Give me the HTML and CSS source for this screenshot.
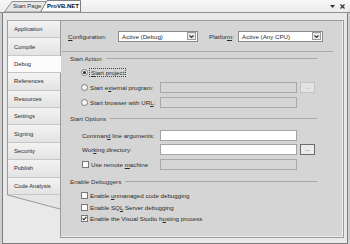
FILE: index.html
```html
<!DOCTYPE html>
<html>
<head>
<meta charset="utf-8">
<link rel="stylesheet" href="styles.css">
</head>
<body>
<div class="tabstrip">
  <div class="doctab doctab--start">
    <svg class="doctab-bg" width="42" height="11" viewBox="0 0 42 11"><polygon points="0.5,11 8,0.5 42,0.5 42,11" fill="#e6e6e6" stroke="#8e8e8e" stroke-width="1"/></svg>
    <span class="doctab-label">Start Page</span>
  </div>
  <div class="doctab doctab--active">
    <svg class="doctab-bg" width="42" height="12" viewBox="0 0 42 12"><polygon points="0.5,12 7,0.5 40.5,0.5 40.5,12" fill="#fbfbfb" stroke="#7e7e7e" stroke-width="1"/></svg>
    <span class="doctab-label">ProVB.NET</span>
  </div>
  <div class="winctl">
    <svg width="5" height="3" viewBox="0 0 5 3"><polygon points="0,0 5,0 2.5,3" fill="#333"/></svg>
    <svg width="5" height="5" viewBox="0 0 5 5"><path d="M0.5 0.5 L4.5 4.5 M4.5 0.5 L0.5 4.5" stroke="#333" stroke-width="1.2" fill="none"/></svg>
  </div>
</div>
<div class="frame">
  <div class="side">
    <div class="side-list">
      <div class="side-tab">Application</div>
      <div class="side-tab">Compile</div>
      <div class="side-tab is-selected">Debug</div>
      <div class="side-tab">References</div>
      <div class="side-tab">Resources</div>
      <div class="side-tab">Settings</div>
      <div class="side-tab">Signing</div>
      <div class="side-tab">Security</div>
      <div class="side-tab">Publish</div>
      <div class="side-tab">Code Analysis</div>
    </div>
    <svg class="side-foot" width="53" height="15" viewBox="0 0 53 15"><polygon points="0,0 53,0 53,14" fill="#e5e5e5"/><line x1="0.5" y1="0" x2="53" y2="14" stroke="#9a9a9a" stroke-width="1"/></svg>
  </div>
  <div class="panel">
    <div class="config-row">
      <span class="cfg-label"><u>C</u>onfiguration:</span>
      <div class="select"><span class="select-text">Active (Debug)</span><span class="select-btn"><svg width="5" height="3" viewBox="0 0 5 3"><polyline points="0.5,0.5 2.5,2.5 4.5,0.5" fill="none" stroke="#333" stroke-width="1.1"/></svg></span></div>
      <span class="cfg-label cfg-label--platform">Platfor<u>m</u>:</span>
      <div class="select select--wide"><span class="select-text">Active (Any CPU)</span><span class="select-btn"><svg width="5" height="3" viewBox="0 0 5 3"><polyline points="0.5,0.5 2.5,2.5 4.5,0.5" fill="none" stroke="#333" stroke-width="1.1"/></svg></span></div>
    </div>
    <div class="sep"></div>

    <div class="heading"><span>Start Action</span><span class="heading-line"></span></div>
    <div class="opt-row opt-row--first">
      <span class="opt-label"><span class="radio"><span class="radio-dot"></span></span><span class="focus"><u>S</u>tart project</span></span>
    </div>
    <div class="opt-row">
      <span class="opt-label"><span class="radio"></span><span>Start e<u>x</u>ternal program:</span></span>
      <span class="textbox"></span>
      <span class="browse">...</span>
    </div>
    <div class="opt-row">
      <span class="opt-label"><span class="radio"></span><span>Start browser with UR<u>L</u>:</span></span>
      <span class="textbox"></span>
    </div>

    <div class="heading heading--options"><span>Start Options</span><span class="heading-line"></span></div>
    <div class="field-row field-row--first">
      <span class="field-label"><span>Comman<u>d</u> line arguments:</span></span>
      <span class="textbox textbox--on"></span>
    </div>
    <div class="field-row">
      <span class="field-label"><span>Wor<u>k</u>ing directory:</span></span>
      <span class="textbox textbox--on"></span>
      <span class="browse browse--on">...</span>
    </div>
    <div class="field-row">
      <span class="field-label"><span class="check"></span><span>Use remote <u>m</u>achine</span></span>
      <span class="textbox"></span>
    </div>

    <div class="heading heading--debuggers"><span>Enable Debuggers</span><span class="heading-line"></span></div>
    <div class="cb-row cb-row--first"><span class="check"></span><span>Enable <u>u</u>nmanaged code debugging</span></div>
    <div class="cb-row"><span class="check"></span><span>Enable SQ<u>L</u> Server debugging</span></div>
    <div class="cb-row"><span class="check"><svg width="5" height="5" viewBox="0 0 5 5"><polyline points="0.6,2.4 1.9,3.8 4.4,0.9" fill="none" stroke="#222" stroke-width="1.1"/></svg></span><span>Enable the Visual Studio h<u>o</u>sting process</span></div>
  </div>
</div>
</body>
</html>
```

FILE: styles.css
```css
* { box-sizing: border-box; }
html, body { margin: 0; padding: 0; }
body {
  width: 350px;
  height: 244px;
  overflow: hidden;
  background: #cfcfcf;
  font-family: "Liberation Sans", Arial, sans-serif;
  color: #2a2a2a;
}
u { text-decoration: underline; text-underline-offset: 1px; text-decoration-thickness: 1px; }

/* document tab strip */
.tabstrip {
  height: 13px;
  display: flex;
  align-items: flex-end;
  background: linear-gradient(#f8f8f8, #ebebeb);
  border-bottom: 1px solid #8f8f8f;
}
.doctab {
  position: relative;
  height: 11px;
  font-size: 6px;
  line-height: 11px;
  white-space: nowrap;
}
.doctab-bg { position: absolute; left: 0; top: 0; }
.doctab-label { position: relative; }
.doctab--start { margin-left: 4px; width: 42px; padding-left: 9px; color: #333; }
.doctab--active { margin-left: -6px; width: 42px; height: 12px; line-height: 12px; padding-left: 7px; font-weight: bold; color: #111; }
.winctl {
  margin-left: auto;
  margin-right: 5px;
  align-self: center;
  display: flex;
  align-items: center;
  gap: 5px;
}
.winctl svg { display: block; }

/* frame */
.frame {
  width: 346px;
  height: 231px;
  margin-left: 2px;
  border: 1px solid #7c7c7c;
  border-top: none;
  background: #e9e9e9;
  display: flex;
  padding: 7px 3px 5px 4px;
}

/* side tabs */
.side { width: 53px; flex: none; display: flex; flex-direction: column; }
.side-list { border-top: 1px solid #a9a9a9; border-left: 1px solid #9c9c9c; }
.side-tab {
  height: 17.4px;
  display: flex;
  align-items: center;
  padding-left: 6px;
  font-size: 5.8px;
  color: #2a2a2a;
  background: linear-gradient(#f3f3f3, #e3e3e3);
  border-bottom: 1px solid #c6c6c6;
  white-space: nowrap;
}
.side-tab.is-selected {
  background: #fcfcfc;
  margin-right: -1px;
  position: relative;
  z-index: 1;
}
.side-foot { display: block; }

/* panel */
.panel {
  flex: 1;
  background: #d5d5d5;
  border: 1px solid #9b9b9b;
  box-shadow: inset -1px -1px 0 #ededed;
  padding: 9px 0 0 7px;
  font-size: 6.2px;
}
.config-row { display: flex; align-items: center; height: 12px; white-space: nowrap; }
.cfg-label { width: 50px; flex: none; }
.cfg-label--platform { margin-left: 11px; width: 29px; }
.select {
  width: 80px;
  height: 11px;
  flex: none;
  background: #fff;
  border: 1px solid #8a8a8a;
  display: flex;
  align-items: center;
  padding-left: 3px;
  padding-right: 1px;
}
.select--wide { width: 85px; }
.select-btn {
  margin-left: auto;
  width: 9px;
  height: 8px;
  border: 1px solid #9a9a9a;
  background: #e8e8e8;
  display: flex;
  align-items: center;
  justify-content: center;
}
.select-btn svg { display: block; }

.sep { border-top: 1px solid #a8a8a8; margin: 9px 10px 0 -6px; }

.heading {
  display: flex;
  align-items: center;
  height: 10px;
  margin: 1px 26px 0 2px;
  color: #333;
  white-space: nowrap;
}
.heading-line { flex: 1; border-top: 1px solid #a8a8a8; margin-left: 4px; }
.heading--options { margin-top: 3px; }
.heading--debuggers { margin-top: 4.5px; }

.opt-row { display: flex; align-items: center; height: 15px; padding-left: 13px; white-space: nowrap; }
.opt-row--first { margin-top: 2px; }
.opt-label { width: 79px; flex: none; display: flex; align-items: center; }
.radio {
  width: 7px;
  height: 7px;
  border-radius: 50%;
  border: 1px solid #7b7b7b;
  background: #f7f7f7;
  margin-right: 2px;
  display: flex;
  align-items: center;
  justify-content: center;
  flex: none;
}
.radio-dot { width: 3px; height: 3px; border-radius: 50%; background: #222; }
.focus { outline: 1px dotted #444; outline-offset: 0; padding: 0 1px; }

.textbox {
  width: 137px;
  height: 11px;
  flex: none;
  border: 1px solid #a9a9a9;
  background: #d6d6d6;
}
.textbox--on { background: #fff; border-color: #a3a3a3; }
.browse {
  margin-left: 3px;
  width: 15px;
  height: 11px;
  flex: none;
  border: 1px solid #c4c4c4;
  background: #e3e3e3;
  color: #a8a8a8;
  font-size: 6px;
  line-height: 8px;
  text-align: center;
}
.browse--on { border-color: #6c6c6c; background: #ebebeb; color: #222; }

.field-row { display: flex; align-items: center; height: 14.5px; padding-left: 14px; white-space: nowrap; }
.field-row--first { margin-top: 5px; }
.field-label { width: 78px; flex: none; display: flex; align-items: center; }

.check {
  width: 7px;
  height: 7px;
  flex: none;
  border: 1px solid #7a7a7a;
  background: #fafafa;
  margin-right: 2px;
  display: flex;
  align-items: center;
  justify-content: center;
}
.check svg { display: block; }

.cb-row { display: flex; align-items: center; height: 11.5px; padding-left: 13px; white-space: nowrap; }
.cb-row--first { margin-top: 4px; }
```
